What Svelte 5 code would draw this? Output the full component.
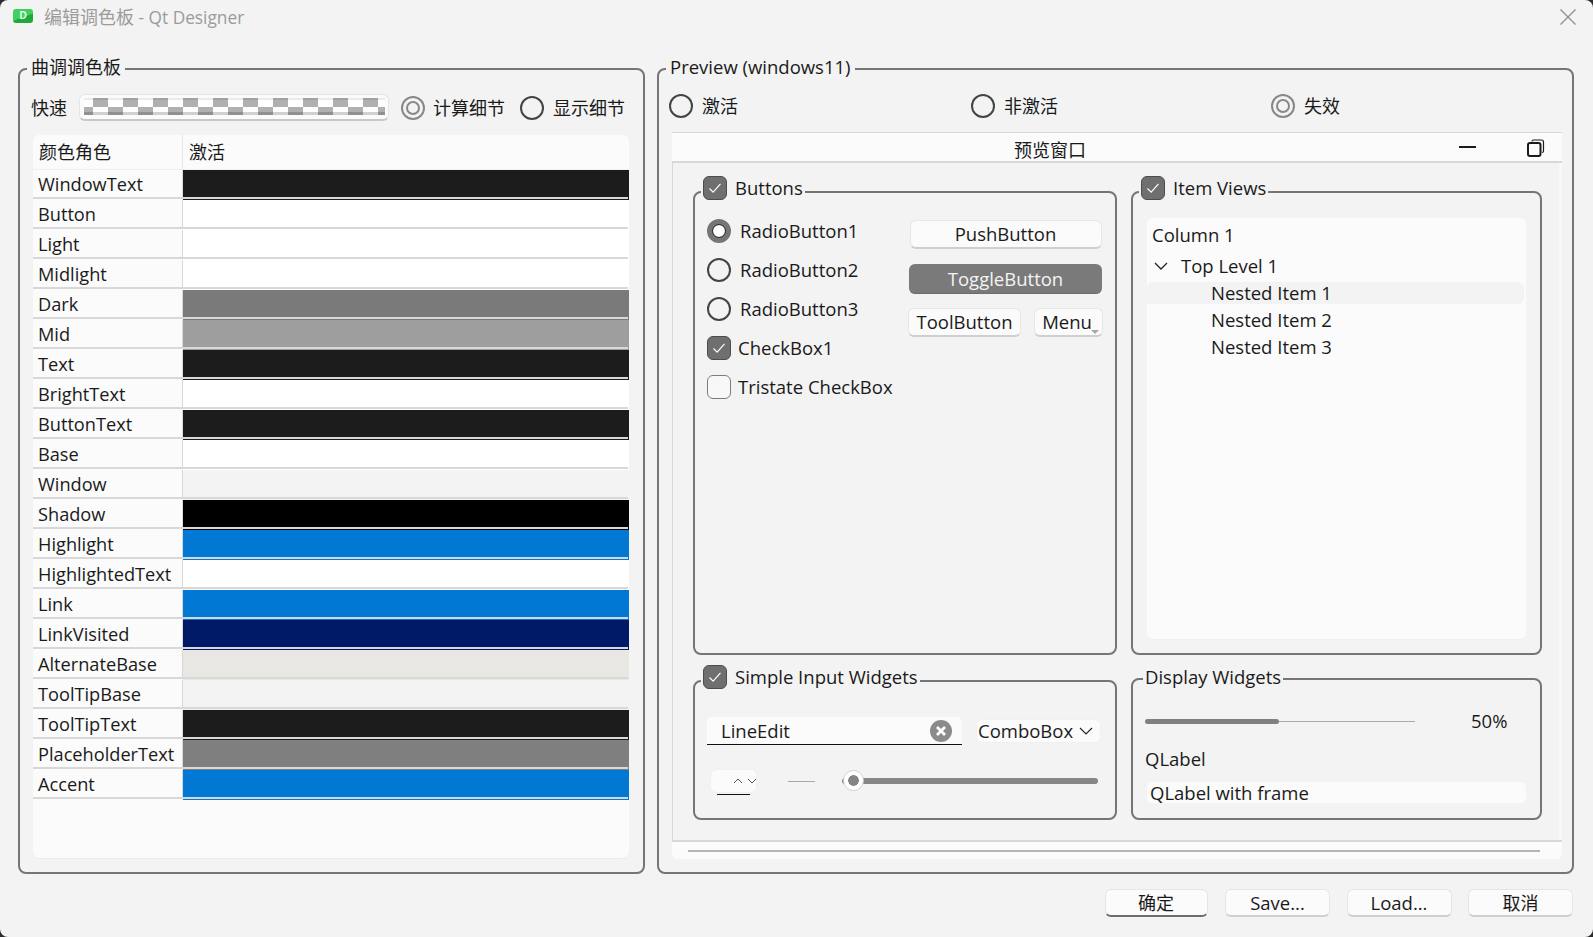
<script>
  const roles = [
    ['WindowText', '#1c1c1c', '#1c1c1c'],
    ['Button', '#ffffff', '#ffffff'],
    ['Light', '#ffffff', '#ffffff'],
    ['Midlight', '#ffffff', '#ffffff'],
    ['Dark', '#7a7a7a', '#7a7a7a'],
    ['Mid', '#9e9e9e', '#9e9e9e'],
    ['Text', '#1c1c1c', '#1c1c1c'],
    ['BrightText', '#ffffff', '#ffffff'],
    ['ButtonText', '#1c1c1c', '#1c1c1c'],
    ['Base', '#ffffff', '#ffffff'],
    ['Window', '#f3f3f3', '#f3f3f3'],
    ['Shadow', '#000000', '#000000'],
    ['Highlight', '#0078d4', '#0078d4'],
    ['HighlightedText', '#ffffff', '#ffffff'],
    ['Link', '#0078d4', '#0078d4'],
    ['LinkVisited', '#001a68', '#001a68'],
    ['AlternateBase', '#e9e7e4', '#e9e7e4'],
    ['ToolTipBase', '#f3f3f3', '#f3f3f3'],
    ['ToolTipText', '#1c1c1c', '#1c1c1c'],
    ['PlaceholderText', '#7f7f7f', '#7f7f7f'],
    ['Accent', '#0078d4', '#0078d4']
  ];
</script>

{#snippet check()}
  <span class="box on">
    <svg viewBox="0 0 24 24" width="22" height="22"><path d="M6 12.5l4 4 8-9" fill="none" stroke="#fff" stroke-width="1.3"/></svg>
  </span>
{/snippet}

<div class="window">
  <header class="titlebar">
    <span class="appicon">D</span>
    <span class="wintitle zh">编辑调色板<span class="latintitle">&nbsp;- Qt Designer</span></span>
    <svg class="close" viewBox="0 0 16 16" width="16" height="16"><path d="M.5.5l15 15M15.500.5l-15 15" stroke="#8f8f8f" stroke-width="1.300" fill="none"/></svg>
  </header>

  <main class="main">
    <section class="group palette">
      <div class="legend plain zh">曲调调色板</div>
      <div class="quick">
        <span class="t zh">快速</span>
        <div class="colorbtn"><div class="checker"></div></div>
        <span class="radio dis"></span><span class="t rl1 zh">计算细节</span>
        <span class="radio"></span><span class="t rl2 zh">显示细节</span>
      </div>
      <div class="table">
        <div class="thead"><div class="th first zh">颜色角色</div><div class="th zh">激活</div></div>
        {#each roles as r}
          <div class="row">
            <div class="role">{r[0]}</div>
            <div class="val" style="--c:{r[1]}"><div class="swatch"></div></div>
          </div>
        {/each}
      </div>
    </section>

    <section class="group preview">
      <div class="legend plain">Preview (windows11)</div>
      <div class="modes zh">
        <div class="mode"><span class="radio"></span><span class="t">激活</span></div>
        <div class="mode"><span class="radio"></span><span class="t">非激活</span></div>
        <div class="mode"><span class="radio dis"></span><span class="t">失效</span></div>
      </div>
      <div class="mdi">
        <div class="mditop">
          <span class="mdititle zh">预览窗口</span>
          <span class="mdimin"></span>
          <svg class="mdirest" viewBox="0 0 18 18" width="18" height="18"><path d="M5 2.500q0-1.500 1.500-1.500h8q2 0 2 2v9q0 1.500-1.500 1.500" fill="none" stroke="#1a1a1a" stroke-width="1.200"/><rect x="1" y="4" width="12.500" height="13" rx="2" fill="none" stroke="#1a1a1a" stroke-width="2"/></svg>
        </div>
        <div class="mdibody">
          <section class="group sub">
            <div class="legend">{@render check()}<span>Buttons</span></div>
            <div class="btngrid">
              <div class="col1">
                <div class="opt"><span class="radio sel"></span><span class="t">RadioButton1</span></div>
                <div class="opt"><span class="radio"></span><span class="t">RadioButton2</span></div>
                <div class="opt"><span class="radio"></span><span class="t">RadioButton3</span></div>
                <div class="opt chk">{@render check()}<span class="t">CheckBox1</span></div>
                <div class="opt chk"><span class="box"></span><span class="t">Tristate CheckBox</span></div>
              </div>
              <div class="col2">
                <div class="btn push">PushButton</div>
                <div class="btn toggle">ToggleButton</div>
                <div class="toolrow">
                  <div class="btn tool">ToolButton</div>
                  <div class="btn menu">Menu<i class="arrow"></i></div>
                </div>
              </div>
            </div>
          </section>

          <section class="group sub">
            <div class="legend">{@render check()}<span>Item Views</span></div>
            <div class="tree">
              <div class="colhead">Column 1</div>
              <div class="top">
                <svg viewBox="0 0 14 8" width="14" height="8"><path d="M1 1l6 6 6-6" fill="none" stroke="#222" stroke-width="1.300"/></svg>
                <span>Top Level 1</span>
              </div>
              <div class="nest current">Nested Item 1</div>
              <div class="nest">Nested Item 2</div>
              <div class="nest">Nested Item 3</div>
            </div>
          </section>

          <section class="group sub inputs">
            <div class="legend">{@render check()}<span>Simple Input Widgets</span></div>
            <div class="inrow">
              <div class="lineedit">
                <span>LineEdit</span>
                <svg viewBox="0 0 22 22" width="22" height="22"><circle cx="11" cy="11" r="11" fill="#8b8b8b"/><path d="M7 7l8 8M15 7l-8 8" stroke="#fff" stroke-width="2.800"/></svg>
              </div>
              <div class="combo">
                <span>ComboBox</span>
                <svg viewBox="0 0 14 8" width="14" height="8"><path d="M1 1l6 6 6-6" fill="none" stroke="#222" stroke-width="1.100"/></svg>
              </div>
            </div>
            <div class="inrow2">
              <div class="spin">
                <svg viewBox="0 0 10 6" width="10" height="6"><path d="M1 5l4-4 4 4" fill="none" stroke="#555" stroke-width="1"/></svg>
                <svg viewBox="0 0 10 6" width="10" height="6"><path d="M1 1l4 4 4-4" fill="none" stroke="#555" stroke-width="1"/></svg>
              </div>
              <div class="dash"></div>
              <div class="slider"><span class="thumb"></span></div>
            </div>
          </section>

          <section class="group sub display">
            <div class="legend plainsub">Display Widgets</div>
            <div class="prog">
              <div class="track"><div class="fill"></div></div>
              <span>50%</span>
            </div>
            <div class="qlabel">QLabel</div>
            <div class="qframe">QLabel with frame</div>
          </section>
        </div>
        <div class="mdifoot"><div class="hscroll"></div></div>
      </div>
    </section>
  </main>

  <footer class="actions">
    <div class="btn act default zh">确定</div>
    <div class="btn act">Save...</div>
    <div class="btn act">Load...</div>
    <div class="btn act zh">取消</div>
  </footer>
</div>

<style>
  :global(body) { margin: 0; background: #2b2b2b; }
  .window {
    width: 1593px; height: 937px; box-sizing: border-box; overflow: hidden;
    background: #f3f3f3; border-radius: 8px; color: #1a1a1a;
    font-family: "Open Sans", "Noto Sans CJK SC", sans-serif; font-size: 18.5px; line-height: 24px;
    display: flex; flex-direction: column;
  }
  .zh { font-size: 18px; }
  .titlebar { height: 68px; box-sizing: border-box; padding: 5px 17px 0 13px; display: flex; align-items: flex-start; flex: none; }
  .appicon {
    width: 20px; height: 14px; margin-top: 4px; border-radius: 3px;
    background: linear-gradient(160deg, #3fd060 55%, #1fa83c 56%);
    color: #e8ffe8; font: 700 10px/14px "Liberation Sans", sans-serif; text-align: center;
  }
  .wintitle { margin-left: 11px; color: #9b9b9b; white-space: nowrap; }
  .latintitle { font-size: 17.3px; }
  .close { margin-left: auto; margin-top: 4px; }

  .main { display: flex; gap: 12px; padding-left: 18px; height: 806px; flex: none; }
  .group { position: relative; box-sizing: border-box; border: 2px solid #757575; border-radius: 8px; }
  .legend {
    position: absolute; left: 8px; top: -16px; padding: 0 4px; background: #f3f3f3;
    display: flex; align-items: center; gap: 8px; height: 26px; white-space: nowrap;
  }
  .palette .legend { left: 7px; }
  .preview > .legend { left: 7px; }
  .palette { width: 627px; height: 806px; padding: 24px 0 0 13px; }
  .preview { width: 917px; height: 806px; }

  .t { white-space: nowrap; }
  .quick { display: flex; align-items: center; height: 27px; margin-left: -2px; }
  .quick .t:first-child { width: 48px; }
  .colorbtn {
    width: 310px; height: 27px; box-sizing: border-box; padding: 3px 3px 4px 4px;
    background: #fbfbfb; border: 1px solid #e4e4e4; border-bottom: 2px solid #c8c8c8; border-radius: 6px; margin-right: 12px;
  }
  .checker {
    height: 100%; position: relative;
    background: conic-gradient(#fff 25%, #b0b0b0 0 50%, #fff 0 75%, #b0b0b0 0) -21px 0 / 30px 18px;
    box-shadow: inset 0 -3px 0 rgba(0,0,0,.18), inset 0 2px 0 rgba(0,0,0,.08);
  }
  .rl1 { margin: 0 15px 0 8px; }
  .rl2 { margin-left: 9px; }

  .radio { width: 24px; height: 24px; box-sizing: border-box; border: 2px solid #444; border-radius: 50%; flex: none; display: inline-block; position: relative; }
  .radio.dis { border-color: #888; }
  .radio.dis::after { content: ""; position: absolute; inset: 3px; border: 2px solid #888; border-radius: 50%; }
  .radio.sel { border: 6px solid #767676; background: #fff; }
  .radio.sel::after { content: ""; position: absolute; inset: -1px; border: 1px solid #333; border-radius: 50%; }

  .box { width: 24px; height: 24px; box-sizing: border-box; border: 1px solid #7c7c7c; border-radius: 6px; flex: none; display: inline-flex; align-items: center; justify-content: center; background: #f8f8f8; }
  .box.on { background: #6f6f6f; border: 1px solid #4c4c4c; }

  .table { margin-top: 14px; width: 596px; height: 723px; background: #fbfbfb; border-radius: 6px; overflow: hidden; box-shadow: 0 1px 0 #ececec; }
  .thead { display: grid; grid-template-columns: 150px 1fr; height: 33px; margin-bottom: 2px; }
  .th { padding-left: 6px; line-height: 34px; border-bottom: 1px solid #f0f0f0; }
  .row { display: grid; grid-template-columns: 150px 1fr; height: 30px; }
  .th.first { border-right: 1px solid #e6e6e6; }
  .role { padding-left: 5px; font-size: 18.2px; line-height: 28px; border-right: 1px solid #d8d8d8; border-bottom: 2px solid #d8d8d8; height: 29px; box-sizing: border-box; }
  .val { height: 30px; border-bottom: 1px solid var(--c); border-right: 1px solid var(--c); box-sizing: border-box; }
  .swatch { height: 27px; background: var(--c); border-bottom: 2px solid #d8d8d8; box-sizing: content-box; }

  .modes { display: grid; grid-template-columns: 302px 300px 1fr; padding: 24px 0 0 10px; }
  .mode { display: flex; align-items: center; gap: 9px; height: 24px; }

  .mdi { margin: 14px 0 0 13px; width: 890px; }
  .mditop {
    height: 31px; box-sizing: border-box; background: #fbfbfb; border-top: 1px solid #d8d8d8; border-bottom: 2px solid #d8d8d8;
    position: relative; text-align: center; line-height: 34px;
  }
  .mdititle { position: relative; left: -67px; }
  .mdimin { position: absolute; left: 787px; top: 13px; width: 17px; height: 2px; background: #1a1a1a; }
  .mdirest { position: absolute; left: 855px; top: 6px; }
  .mdibody {
    display: grid; grid-template-columns: 424px 411px; grid-template-rows: 464px 140px; gap: 25px 14px;
    padding: 28px 0 20px 20px; background: #f3f3f3; border-left: 1px solid #d8d8d8; height: 677px; box-sizing: border-box;
    box-shadow: inset -3px 0 0 #f8f8f8;
  }
  .mdifoot { height: 19px; background: #fbfbfb; border-top: 2px solid #d8d8d8; border-radius: 0 0 6px 6px; padding: 8px 22px 0 16px; box-sizing: border-box; }
  .hscroll { height: 2px; background: #b4b4b4; }

  .sub .legend { left: 6px; top: -18px; padding: 0 2px; }
  .sub .legend.plainsub { left: 10px; top: -16px; }

  .btngrid { display: flex; padding: 27px 0 0 12px; }
  .col1 { width: 203px; display: flex; flex-direction: column; margin-top: -8px; }
  .opt { display: flex; align-items: center; height: 39px; gap: 9px; margin-top: -7px; padding-top: 7px; }
  .opt.chk { gap: 7px; }
  .col1 .opt:first-child { margin-top: -8px; }
  .col2 { width: 195px; display: flex; flex-direction: column; gap: 15px; align-items: center; margin-left: -2px; }

  .btn {
    box-sizing: border-box; background: #fbfbfb; border: 1px solid #e6e6e6; border-bottom: 2px solid #cfcfcf; border-radius: 6px;
    text-align: center; height: 29px; line-height: 25px; white-space: nowrap;
  }
  .push { width: 192px; }
  .toggle { width: 193px; height: 30px; line-height: 29px; background: #7a7a7a; color: #f4f4f4; border: none; border-bottom: 1px solid #6c6c6c; }
  .toolrow { display: flex; gap: 13px; margin-top: -1px; width: 195px; }
  .tool { width: 113px; }
  .menu { width: 69px; position: relative; padding-right: 3px; }
  .arrow { position: absolute; right: 3px; bottom: 1px; width: 0; height: 0; border: 4px solid transparent; border-top: 4px solid #a8a8a8; border-bottom: 0; }

  .tree { margin: 25px 0 0 14px; width: 379px; height: 421px; background: #fbfbfb; border-radius: 6px; box-shadow: 0 1px 0 #f0f0f0; overflow: hidden; }
  .colhead { padding: 5px 0 0 5px; height: 31px; box-sizing: border-box; }
  .top { display: flex; align-items: center; height: 33px; padding-left: 7px; gap: 13px; }
  .nest { height: 27px; line-height: 22px; padding-left: 64px; }
  .current { height: 22px; margin-bottom: 5px; background: #f3f3f3; border-radius: 6px 6px 6px 0; width: 377px; box-sizing: border-box; }

  .inputs .inrow { display: flex; align-items: center; gap: 14px; padding: 35px 0 0 12px; }
  .lineedit {
    width: 255px; height: 28px; box-sizing: border-box; background: #fbfbfb; border-bottom: 1px solid #111; border-radius: 5px 5px 0 0;
    display: flex; align-items: center; justify-content: space-between; padding: 0 10px 0 14px;
  }
  .combo {
    width: 125px; height: 24px; box-sizing: border-box; background: #fbfbfb; border-radius: 6px; border: 1px solid #f0f0f0;
    display: flex; align-items: center; justify-content: space-between; padding: 0 7px 0 1px;
  }
  .inrow2 { display: flex; align-items: center; padding: 24px 0 0 15px; }
  .spin {
    width: 47px; height: 24px; box-sizing: border-box; background: #fbfbfb; border-radius: 6px; border: 1px solid #f0f0f0; position: relative;
    display: flex; align-items: center; justify-content: flex-end; gap: 4px; padding-left: 20px;
  }
  .spin svg:last-child { margin-right: -1px; }
  .spin::after { content: ""; position: absolute; left: 6px; bottom: -3px; width: 33px; height: 1px; background: #111; }
  .dash { width: 27px; height: 1px; background: #a8a8a8; margin: 0 27px 0 31px; }
  .slider { width: 256px; height: 6px; background: #868686; border-radius: 3px; position: relative; margin-top: -1px; }
  .thumb {
    position: absolute; left: 1px; top: -7.5px; width: 21px; height: 21px; box-sizing: border-box; border-radius: 50%;
    background: radial-gradient(circle, #858585 0 5px, #fff 5.6px); border: 1px solid #d2d2d2;
  }

  .display { margin-top: -2px; }
  .prog { display: flex; align-items: center; padding: 29px 0 0 12px; height: 24px; }
  .track { width: 270px; height: 1px; background: #aaa; position: relative; }
  .fill { position: absolute; left: 0; top: -2px; width: 134px; height: 5px; border-radius: 3px; background: #808080; }
  .prog span { margin-left: 56px; }
  .qlabel { padding: 14px 0 0 12px; }
  .qframe { margin: 11px 0 0 14px; width: 379px; height: 21px; line-height: 21px; background: #fbfbfb; border-radius: 5px; padding-left: 3px; box-sizing: border-box; }

  .actions { display: flex; justify-content: flex-end; gap: 16.5px; padding: 15px 20px 0 0; }
  .act { width: 105px; height: 28px; line-height: 26px; }
  .default { width: 103px; margin-right: 1px; border-bottom-color: #6d6d6d; }
</style>
